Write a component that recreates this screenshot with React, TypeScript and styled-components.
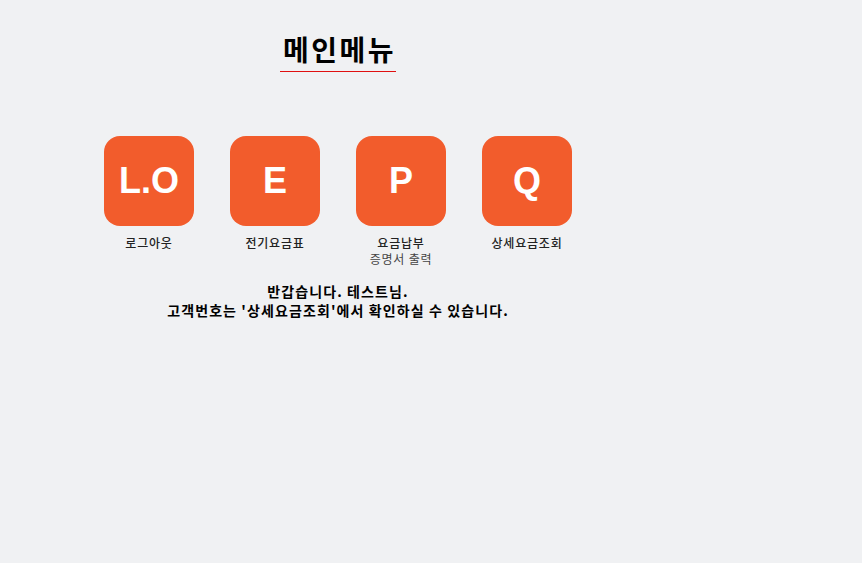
import React from "react";
import styled, { createGlobalStyle } from "styled-components";

const GlobalStyle = createGlobalStyle`
  body {
    margin: 8px;
    background: #f0f1f3;
    font-family: "Noto Sans CJK KR", "Noto Sans", sans-serif;
    color: #111;
  }
`;

const Page = styled.div`
  width: 660px;
  display: flex;
  flex-direction: column;
  align-items: center;
`;

const Title = styled.h1`
  margin: 22px 0 0;
  padding: 0 0 3px 3px;
  font-size: 28px;
  font-weight: 700;
  line-height: 38px;
  letter-spacing: 2.5px;
  color: #000;
  border-bottom: 1px solid #e01010;
`;

const MenuRow = styled.div`
  display: flex;
  margin-top: 64px;
`;

const MenuItem = styled.div`
  width: 126px;
  display: flex;
  flex-direction: column;
  align-items: center;
  cursor: pointer;
`;

const Tile = styled.div`
  width: 90px;
  height: 90px;
  border-radius: 16px;
  background: #f25c2c;
  color: #fff;
  display: flex;
  align-items: center;
  justify-content: center;
  font-family: "Liberation Sans", Arial, sans-serif;
  font-weight: 700;
  font-size: 36px;
`;

const Label = styled.div`
  margin-top: 9px;
  font-size: 12px;
  font-weight: 500;
  line-height: 16px;
  letter-spacing: 0.8px;
  color: #222;
  text-align: center;
`;

const Sub = styled.div`
  font-weight: 400;
  color: #444;
`;

const Welcome = styled.p`
  margin: 15px 0 0;
  font-size: 14px;
  font-weight: 700;
  line-height: 19px;
  letter-spacing: 1.1px;
  text-align: center;
  color: #000;
`;

const menus = [
  { key: "L.O", label: "로그아웃" },
  { key: "E", label: "전기요금표" },
  { key: "P", label: "요금납부", sub: "증명서 출력" },
  { key: "Q", label: "상세요금조회" },
];

export default function App() {
  return (
    <>
      <GlobalStyle />
      <Page>
        <Title>메인메뉴</Title>
        <MenuRow>
          {menus.map((m) => (
            <MenuItem key={m.key}>
              <Tile>{m.key}</Tile>
              <Label>
                {m.label}
                {m.sub && <Sub>{m.sub}</Sub>}
              </Label>
            </MenuItem>
          ))}
        </MenuRow>
        <Welcome>
          반갑습니다. 테스트님.
          <br />
          고객번호는 '상세요금조회'에서 확인하실 수 있습니다.
        </Welcome>
      </Page>
    </>
  );
}
